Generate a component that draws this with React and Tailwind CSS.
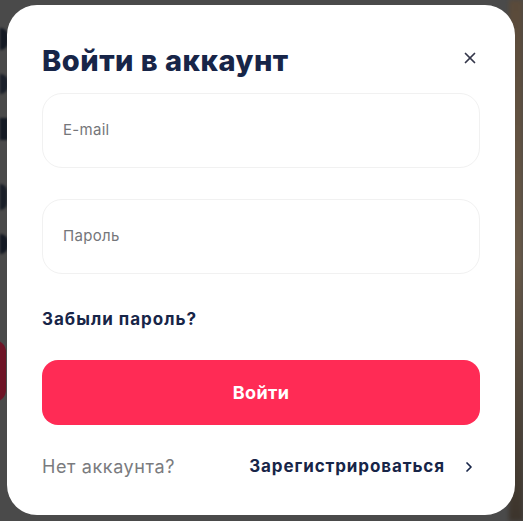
import { X, ChevronRight } from "lucide-react"

export default function App() {
  return (
    <div
      className="relative w-[523px] h-[521px] overflow-hidden bg-[#4a4a4a]"
      style={{ fontFamily: "Inter, 'Noto Sans', sans-serif" }}
    >
      {/* page behind the overlay, blurred */}
      <div className="absolute left-0 top-[28px] flex flex-col gap-[24px] blur-[1px]">
        <div className="w-[8px] h-[22px] rounded-r-full bg-[#151a24]" />
        <div className="w-[8px] h-[20px] rounded-r-full bg-[#1c212b]" />
        <div className="w-[8px] h-[22px] bg-[#151a24]" />
        <div className="mt-[20px] w-[7px] h-[26px] rounded-r-full bg-[#1a1f28]" />
        <div className="w-[8px] h-[20px] rounded-r-full bg-[#151a24]" />
      </div>
      <div className="absolute left-[-30px] top-[340px] w-[36px] h-[62px] rounded-[12px] bg-[#6e1426]" />
      <div className="absolute right-0 top-0 w-[14px] h-full bg-gradient-to-b from-[#5a4a3a] via-[#6a5a48] to-[#3c342c] blur-[2px]" />

      {/* modal */}
      <div className="absolute left-[7px] top-[5px] w-[508px] h-[510px] rounded-[30px] bg-white px-[35px] pt-[38px]">
        <div className="flex items-start justify-between">
          <h1 className="text-[29px] font-extrabold leading-[36px] tracking-[0.5px] text-[#172548]">
            Войти в аккаунт
          </h1>
          <button className="mt-[6px] mr-[1px] text-[#34364a]">
            <X size={18} strokeWidth={2.3} />
          </button>
        </div>

        <div className="mt-[14px] flex flex-col gap-[31px]">
          <div className="h-[75px] rounded-[20px] border border-[#f1f1f1] flex items-center px-[20px]">
            <span className="text-[15px] tracking-[0.3px] text-[#75767a]">E-mail</span>
          </div>
          <div className="h-[75px] rounded-[20px] border border-[#f1f1f1] flex items-center px-[20px]">
            <span className="text-[15px] tracking-[0.3px] text-[#75767a]">Пароль</span>
          </div>
        </div>

        <div className="mt-[33px] text-[17px] font-bold leading-[24px] tracking-[1px] text-[#172548]">
          Забыли пароль?
        </div>

        <button className="mt-[29px] w-full h-[65px] rounded-[16px] bg-[#ff2b55] text-white text-[18px] font-bold tracking-[0.4px]">
          Войти
        </button>

        <div className="mt-[28px] flex items-center justify-between">
          <span className="text-[18px] tracking-[0.6px] text-[#7a7b7e]">Нет аккаунта?</span>
          <span className="flex items-center gap-[16px] text-[17px] font-bold tracking-[0.9px] text-[#172548]">
            Зарегистрироваться
            <ChevronRight size={16} strokeWidth={2.6} className="mr-[3px]" />
          </span>
        </div>
      </div>
    </div>
  )
}
